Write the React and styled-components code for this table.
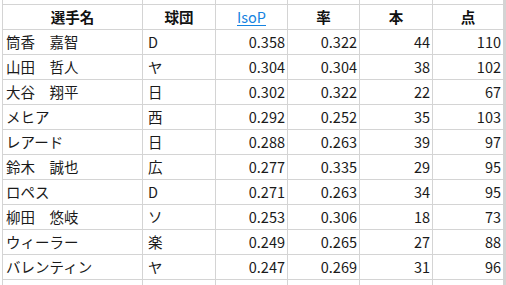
import React from "react";
import styled, { createGlobalStyle } from "styled-components";

const GlobalStyle = createGlobalStyle`
  html, body {
    margin: 0;
    padding: 0;
    background: #ffffff;
  }
`;

const Page = styled.div`
  width: 506px;
  height: 285px;
  overflow: hidden;
  background: #ffffff;
  padding-left: 2px;
  box-sizing: border-box;
  font-family: "Noto Sans CJK JP", "Noto Sans", sans-serif;
  font-size: 14.5px;
  color: #1a1a1a;
`;

const Sheet = styled.div`
  display: grid;
  width: 502px;
  grid-template-columns: 139px 72px 71px 71px 72px 70px;
  grid-template-rows: 4px repeat(12, 24px);
  gap: 1px;
  padding: 0 1px;
  background: #d4d4d4;
`;

const Cell = styled.div`
  background: #ffffff;
  display: flex;
  align-items: center;
  justify-content: ${(p) =>
    p.$align === "right" ? "flex-end" : p.$align === "center" ? "center" : "flex-start"};
  padding: ${(p) => p.$pad || "0"};
  white-space: pre;
  overflow: hidden;
  line-height: 1;
`;

const Head = styled(Cell)`
  font-weight: 700;
  color: #111;
`;

const Link = styled.span`
  color: #1583e0;
  text-decoration: underline;
  text-underline-offset: 2px;
  font-weight: 400;
`;

const players = [
  ["筒香　嘉智", "D", "0.358", "0.322", 44, 110],
  ["山田　哲人", "ヤ", "0.304", "0.304", 38, 102],
  ["大谷　翔平", "日", "0.302", "0.322", 22, 67],
  ["メヒア", "西", "0.292", "0.252", 35, 103],
  ["レアード", "日", "0.288", "0.263", 39, 97],
  ["鈴木　誠也", "広", "0.277", "0.335", 29, 95],
  ["ロペス", "D", "0.271", "0.263", 34, 95],
  ["柳田　悠岐", "ソ", "0.253", "0.306", 18, 73],
  ["ウィーラー", "楽", "0.249", "0.265", 27, 88],
  ["バレンティン", "ヤ", "0.247", "0.269", 31, 96],
];

const blank = [0, 1, 2, 3, 4, 5];

export default function App() {
  return (
    <Page>
      <GlobalStyle />
      <Sheet>
        {blank.map((i) => (
          <Cell key={"t" + i} />
        ))}
        <Head $align="center">選手名</Head>
        <Head $align="center">球団</Head>
        <Head $align="center">
          <Link>IsoP</Link>
        </Head>
        <Head $align="center">率</Head>
        <Head $align="center">本</Head>
        <Head $align="center">点</Head>
        {players.map((r) => (
          <React.Fragment key={r[0]}>
            <Cell $pad="0 0 0 3px">{r[0]}</Cell>
            <Cell $pad="0 0 0 5px">{r[1]}</Cell>
            <Cell $align="right" $pad="0 2px 0 0">{r[2]}</Cell>
            <Cell $align="right" $pad="0 2px 0 0">{r[3]}</Cell>
            <Cell $align="right" $pad="0 2px 0 0">{r[4]}</Cell>
            <Cell $align="right" $pad="0 2px 0 0">{r[5]}</Cell>
          </React.Fragment>
        ))}
        {blank.map((i) => (
          <Cell key={"b" + i} />
        ))}
      </Sheet>
    </Page>
  );
}
